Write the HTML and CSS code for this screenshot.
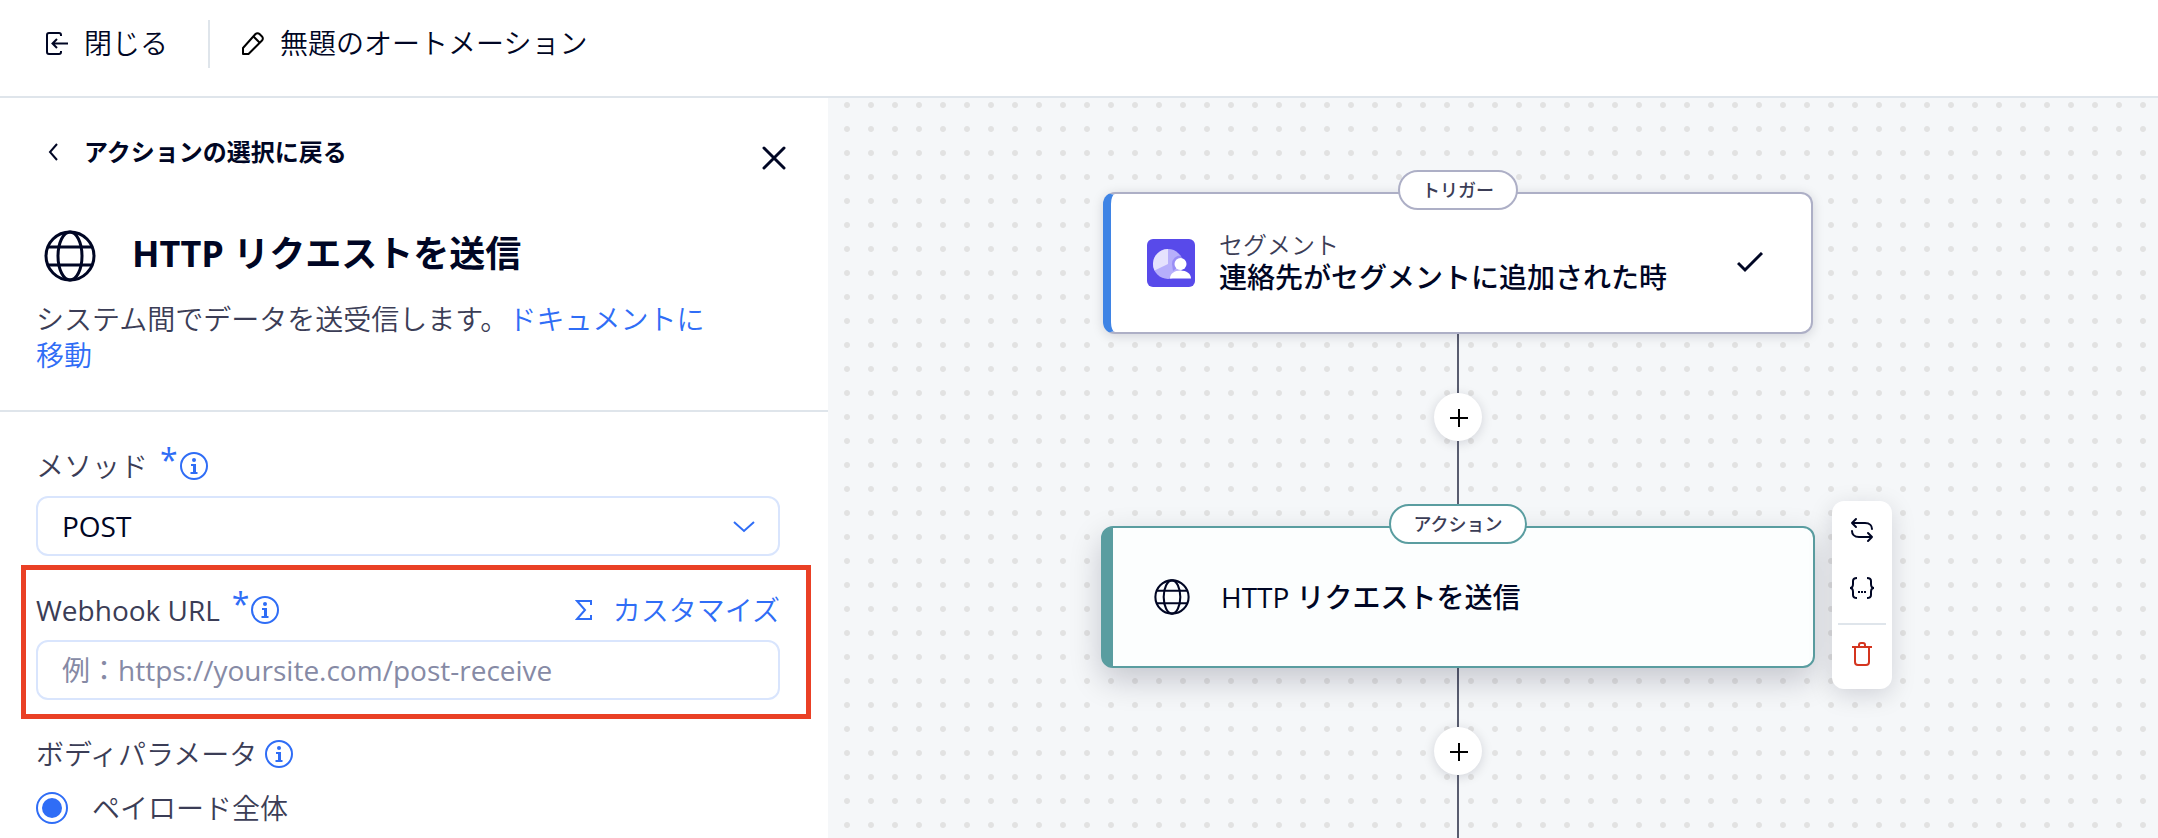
FILE: index.html
```html
<!DOCTYPE html>
<html lang="ja">
<head>
  <meta charset="UTF-8">
  <meta name="viewport" content="width=device-width, initial-scale=1">
  <title>無題のオートメーション</title>
  <link rel="stylesheet" href="styles.css">
</head>
<body>

<!-- Shared icons -->
<svg class="sprite" aria-hidden="true">
  <symbol id="icon-globe" viewBox="0 0 52 52">
    <g fill="none" stroke="currentColor" stroke-width="3">
      <circle cx="26" cy="26" r="24"/>
      <ellipse cx="26" cy="26" rx="12" ry="24"/>
      <path d="M4 17h44M4 35h44"/>
    </g>
  </symbol>
  <symbol id="icon-info" viewBox="0 0 28 28">
    <circle cx="14" cy="14" r="13" fill="none" stroke="currentColor" stroke-width="2"/>
    <circle cx="14" cy="8" r="2" fill="currentColor"/>
    <path d="M11 13h4v8M10.5 21h7" fill="none" stroke="currentColor" stroke-width="2"/>
    <path d="M13 13h3v8h-3z" fill="currentColor"/>
  </symbol>
  <symbol id="icon-plus" viewBox="0 0 18 18">
    <path d="M9 0v18M0 9h18" fill="none" stroke="#000" stroke-width="2"/>
  </symbol>
</svg>

<header class="topbar">
  <button type="button" class="topbar-button">
    <svg width="24" height="24" viewBox="0 0 24 24" fill="none" stroke="currentColor" stroke-width="2">
      <path d="M17 5V4a2 2 0 0 0-2-2H5a2 2 0 0 0-2 2v17a2 2 0 0 0 2 2h10a2 2 0 0 0 2-2v-1"/>
      <path d="M24 12.500H9M13 8l-4.500 4.500L13 17"/>
    </svg>
    <span>閉じる</span>
  </button>
  <div class="topbar-divider"></div>
  <button type="button" class="topbar-button">
    <svg width="24" height="24" viewBox="0 0 24 24" fill="none" stroke="#000" stroke-width="2" stroke-linejoin="round">
      <path d="M3 17L15.500 3a2.800 2.800 0 0 1 4 0l2.500 2.500a2.800 2.800 0 0 1 0 4L8.500 23H3z"/>
      <path d="M13.500 5.500l6 6"/>
    </svg>
    <span>無題のオートメーション</span>
  </button>
</header>

<div class="workspace">

  <!-- Settings panel -->
  <aside class="panel">
    <div class="panel-head">
      <div class="panel-nav">
        <button type="button" class="back">
          <svg width="10" height="18" viewBox="0 0 10 18" fill="none" stroke="currentColor" stroke-width="2">
            <path d="M9 1L2 9l7 8"/>
          </svg>
          <span>アクションの選択に戻る</span>
        </button>
        <button type="button" class="close" aria-label="パネルを閉じる">
          <svg width="24" height="24" viewBox="0 0 24 24" fill="none" stroke="currentColor" stroke-width="3" stroke-linecap="round">
            <path d="M2 2l20 20M22 2L2 22"/>
          </svg>
        </button>
      </div>
      <div class="panel-title">
        <svg width="52" height="52"><use href="#icon-globe"/></svg>
        <h1>HTTP リクエストを送信</h1>
      </div>
      <p class="description">システム間でデータを送受信します。<a href="#">ドキュメントに移動</a></p>
    </div>

    <form class="form">
      <div class="field">
        <div class="label-row">
          <label for="method">メソッド</label>
          <span class="required">*</span>
          <svg class="info" width="28" height="28"><use href="#icon-info"/></svg>
        </div>
        <div class="select-wrap">
          <select id="method" class="control">
            <option>POST</option>
          </select>
          <svg class="select-arrow" width="22" height="14" viewBox="0 0 22 14" fill="none" stroke="currentColor" stroke-width="2">
            <path d="M1 2l10 9 10-9"/>
          </svg>
        </div>
      </div>

      <div class="field field-highlight">
        <div class="label-row">
          <label for="webhook">Webhook URL</label>
          <span class="required">*</span>
          <svg class="info" width="28" height="28"><use href="#icon-info"/></svg>
          <button type="button" class="customize">
            <svg width="18" height="22" viewBox="0 0 18 22" fill="none" stroke="currentColor" stroke-width="2">
              <path d="M16 6V2H2l8 9-8 9h14v-4"/>
            </svg>
            <span>カスタマイズ</span>
          </button>
        </div>
        <input type="text" id="webhook" class="control" placeholder="例：https://yoursite.com/post-receive">
      </div>

      <div class="field" role="radiogroup" aria-labelledby="body-params">
        <div class="label-row label-row-body">
          <span id="body-params">ボディパラメータ</span>
          <svg class="info" width="28" height="28"><use href="#icon-info"/></svg>
        </div>
        <div class="radio-row">
          <input type="radio" id="payload" name="body" checked>
          <label for="payload">ペイロード全体</label>
        </div>
      </div>
    </form>
  </aside>

  <!-- Flow canvas -->
  <main class="canvas">
    <section class="node">
      <div class="tag">トリガー</div>
      <div class="card card-trigger">
        <svg width="48" height="48" viewBox="0 0 48 48">
          <rect width="48" height="48" rx="6" fill="#584aea"/>
          <circle cx="21" cy="25" r="15" fill="#b7affb"/>
          <path d="M21 25V10A15 15 0 0 0 7.500 31.500z" fill="#e5e2fd"/>
          <path d="M25 25a8.500 8.500 0 0 1 9-8.500l1 8.500-9 7z" fill="#998ef5"/>
          <circle cx="33.500" cy="25" r="6" fill="#fff"/>
          <path d="M23 39.500c0-5 4.500-8 10.500-8s10.500 3 10.500 8z" fill="#fff"/>
        </svg>
        <div class="card-text">
          <p class="card-kicker">セグメント</p>
          <h2>連絡先がセグメントに追加された時</h2>
        </div>
        <svg class="check" width="26" height="22" viewBox="0 0 26 22" fill="none" stroke="currentColor" stroke-width="3">
          <path d="M1 11l7 7L25 1"/>
        </svg>
      </div>
    </section>

    <div class="line line-top"></div>
    <button type="button" class="add" aria-label="ステップを追加">
      <svg width="18" height="18"><use href="#icon-plus"/></svg>
    </button>
    <div class="line line-bottom"></div>

    <section class="node">
      <div class="tag tag-action">アクション</div>
      <div class="card card-action">
        <svg width="36" height="36"><use href="#icon-globe"/></svg>
        <h2>HTTP リクエストを送信</h2>
        <div class="tools">
          <button type="button" aria-label="置き換え">
            <svg width="24" height="26" viewBox="0 0 24 26" fill="none" stroke="currentColor" stroke-width="2" stroke-linecap="round" stroke-linejoin="round">
              <path d="M6 2L2 6l4 4M2 6h13c5 0 7 3 7 6"/>
              <path d="M18 16l4 4-4 4M22 20H9c-5 0-7-3-7-6"/>
            </svg>
          </button>
          <button type="button" aria-label="変数">
            <svg width="26" height="22" viewBox="0 0 26 22" fill="none" stroke="currentColor" stroke-width="2">
              <path d="M8 1C5 1 4 2 4 4v3c0 3-1 4-3 4 2 0 3 1 3 4v3c0 2 1 3 4 3"/>
              <path d="M18 1c3 0 4 1 4 3v3c0 3 1 4 3 4-2 0-3 1-3 4v3c0 2-1 3-4 3"/>
              <path d="M9 15h2M12 15h2M15 15h2"/>
            </svg>
          </button>
          <hr>
          <button type="button" class="delete" aria-label="削除">
            <svg width="20" height="24" viewBox="0 0 20 24" fill="none" stroke="currentColor" stroke-width="2">
              <path d="M0 5h20M7 5V3a2 2 0 0 1 2-2h2a2 2 0 0 1 2 2v2M3 5v15a3 3 0 0 0 3 3h8a3 3 0 0 0 3-3V5"/>
            </svg>
          </button>
        </div>
      </div>
    </section>

    <div class="line line-top"></div>
    <button type="button" class="add" aria-label="ステップを追加">
      <svg width="18" height="18"><use href="#icon-plus"/></svg>
    </button>
    <div class="line line-rest"></div>
  </main>

</div>

</body>
</html>
```
FILE: styles.css
```css
/* --- RESET & BASE --- */
* {
  margin: 0;
  padding: 0;
  box-sizing: border-box;
}

body {
  display: flex;
  flex-direction: column;
  min-height: 100vh;
  background: #fff;
  color: #000624;
  font-family: "Open Sans", "Noto Sans CJK JP", sans-serif;
  font-size: 28px;
  font-weight: 350;
  line-height: 36px;
}

button {
  border: none;
  background: none;
  color: inherit;
  font: inherit;
  cursor: pointer;
}

svg {
  display: block;
  flex-shrink: 0;
}

a {
  color: #2f6df6;
  text-decoration: none;
}

.sprite {
  position: absolute;
  width: 0;
  height: 0;
}

/* --- TOP BAR --- */
.topbar {
  display: flex;
  align-items: center;
  gap: 30px;
  padding: 20px 44px 28px;
  border-bottom: 2px solid #dfe5eb;
}

.topbar-button {
  display: flex;
  align-items: center;
  gap: 16px;
  padding-bottom: 2px;
}

.topbar-divider {
  width: 2px;
  height: 48px;
  margin-left: 10px;
  background: #dfe5eb;
}

/* --- LAYOUT --- */
.workspace {
  display: flex;
  flex: 1;
}

/* --- PANEL --- */
.panel {
  flex: 0 0 828px;
}

.panel-head {
  padding: 36px 42px 37px 36px;
  border-bottom: 2px solid #dfe5eb;
}

.panel-nav {
  display: flex;
  align-items: flex-end;
  justify-content: space-between;
}

.back {
  display: flex;
  align-items: center;
  gap: 26px;
  padding-left: 12px;
  font-size: 24px;
  font-weight: 600;
}

.panel-title {
  display: flex;
  align-items: center;
  gap: 36px;
  margin-top: 60px;
  padding-left: 8px;
}

.panel-title h1 {
  padding-bottom: 4px;
  font-size: 36px;
  line-height: 48px;
  font-weight: 700;
}

.description {
  max-width: 690px;
  margin-top: 19px;
  color: #3b3d56;
}

/* --- FORM --- */
.form {
  padding: 36px 17px 14px 21px;
}

.field {
  padding: 0 31px 0 15px;
}

.field-highlight {
  margin: 9px 0 17px;
  padding: 22px 26px 14px 10px;
  border: 5px solid #ea4025;
}

.label-row {
  display: flex;
  align-items: center;
  margin-bottom: 12px;
  color: #3b3d56;
}

.label-row label[for="webhook"] {
  font-weight: 400;
}

.label-row-body {
  margin-bottom: 20px;
}

.label-row-body .info {
  margin-left: 8px;
}

.required {
  margin: 0 2px 0 12px;
  padding-bottom: 12px;
  color: #2f6df6;
  font-size: 32px;
  font-weight: 400;
  line-height: 24px;
}

.info {
  color: #2f6df6;
}

.customize {
  display: flex;
  align-items: center;
  gap: 20px;
  margin-left: auto;
  color: #2f6df6;
}

.control {
  display: block;
  width: 100%;
  height: 60px;
  padding: 0 24px;
  border: 2px solid #d9e5fd;
  border-radius: 12px;
  outline: none;
  background: #fff;
  color: #000624;
  font: inherit;
  font-weight: 400;
  appearance: none;
}

.control::placeholder {
  color: #868aa5;
}

.select-wrap {
  position: relative;
}

.select-arrow {
  position: absolute;
  top: 24px;
  right: 25px;
  color: #2f6df6;
  pointer-events: none;
}

.radio-row {
  display: flex;
  align-items: center;
  gap: 24px;
  height: 32px;
  color: #3b3d56;
}

.radio-row input {
  width: 32px;
  height: 32px;
  border: 2px solid #2f6df6;
  border-radius: 50%;
  background: #2f6df6;
  background-clip: content-box;
  padding: 4px;
  appearance: none;
}

/* --- CANVAS --- */
.canvas {
  display: flex;
  flex: 1;
  flex-direction: column;
  align-items: center;
  padding: 72px 70px 0 0;
  background-color: #f5f7f9;
  background-image: radial-gradient(circle, #e2e2e2 2.5px, transparent 3.5px);
  background-position: 7px -5px;
  background-size: 24px 24px;
}

.node {
  display: flex;
  flex-direction: column;
  align-items: center;
}

.tag {
  z-index: 1;
  margin-bottom: -18px;
  padding: 0 22px;
  border: 2px solid #adafc6;
  border-radius: 20px;
  background: #fff;
  color: #3b3d56;
  font-size: 18px;
  font-weight: 500;
}

.tag-action {
  border-color: #5a9da0;
}

.card {
  position: relative;
  display: flex;
  align-items: center;
  height: 142px;
  border: 2px solid #adafc6;
  border-radius: 12px;
  background: #fff;
}

.card h2 {
  font-size: 28px;
  line-height: 36px;
  font-weight: 500;
}

.card-trigger {
  width: 710px;
  padding: 0 48px 0 36px;
  border-left: 8px solid #3f84e5;
  gap: 24px;
  box-shadow: 0 2px 12px rgba(0, 6, 36, 0.15);
}

.card-kicker {
  color: #3b3d56;
  font-size: 24px;
  line-height: 28px;
}

.check {
  margin-left: auto;
}

.card-action {
  width: 714px;
  padding: 0 41px;
  border-color: #5a9da0;
  border-left-width: 12px;
  background: #fcfefe;
  gap: 31px;
  box-shadow: 0 12px 32px rgba(0, 6, 36, 0.2);
}

/* --- CONNECTORS --- */
.line {
  width: 2px;
  background: #595d70;
}

.line-top {
  height: 59px;
}

.line-bottom {
  height: 63px;
}

.line-rest {
  flex: 1;
  min-height: 63px;
}

.add {
  display: flex;
  align-items: center;
  justify-content: center;
  width: 48px;
  height: 48px;
  padding: 2px 0 0 2px;
  border-radius: 50%;
  background: #fff;
  box-shadow: 0 2px 12px rgba(0, 6, 36, 0.15);
}

/* --- CARD TOOLBAR --- */
.tools {
  position: absolute;
  top: -27px;
  left: 100%;
  display: flex;
  flex-direction: column;
  width: 60px;
  margin-left: 19px;
  padding: 0 6px 6px;
  border-radius: 12px;
  background: #fff;
  box-shadow: 0 6px 24px rgba(0, 6, 36, 0.15);
}

.tools button {
  display: flex;
  align-items: center;
  justify-content: center;
  height: 58px;
}

.tools hr {
  height: 2px;
  margin: 6px 0 0;
  border: none;
  background: #dfe5eb;
}

.tools .delete {
  color: #d4351f;
}
```
